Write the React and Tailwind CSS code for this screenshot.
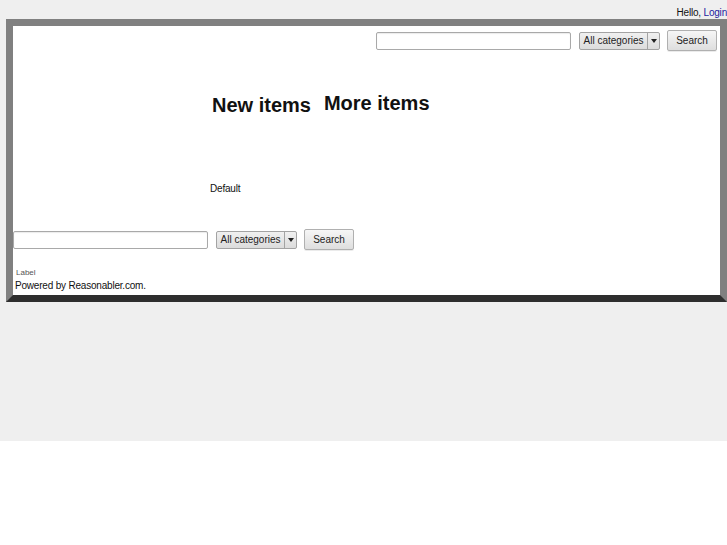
import React from "react";

function SearchRow({ inputW }) {
  return (
    <div className="flex items-center">
      <input
        type="text"
        className="h-[18px] rounded-[2px] border border-[#a9a9a9] bg-white shadow-[inset_0_1px_1px_rgba(0,0,0,0.08)] outline-none"
        style={{ width: inputW }}
      />
      <div className="ml-[8px] flex h-[18px] w-[81px] items-stretch rounded-[2px] border border-[#a3a3a3] bg-gradient-to-b from-[#f0f0f0] to-[#dcdcdc] text-[10px] text-[#222]">
        <span className="flex flex-1 items-center justify-center">All categories</span>
        <span className="flex w-[12px] items-center justify-center border-l border-[#a3a3a3]">
          <svg width="6" height="4" viewBox="0 0 6 4"><path d="M0 0h6L3 4z" fill="#222" /></svg>
        </span>
      </div>
      <button className="ml-[7px] flex h-[21px] w-[50px] items-center justify-center rounded-[2px] border border-[#b0b0b0] bg-gradient-to-b from-[#f6f6f6] to-[#dedede] text-[10px] text-[#222] shadow-[0_1px_0_rgba(0,0,0,0.08)]">
        Search
      </button>
    </div>
  );
}

export default function App() {
  return (
    <div className="w-[727px] overflow-hidden bg-white" style={{ fontFamily: '"Liberation Sans", Arial, sans-serif' }}>
      <div className="h-[441px] bg-[#efefef] pt-[6px]">
        <div className="flex h-[13px] justify-end text-[10px] leading-[13px] tracking-[-0.2px] text-[#111]">
          <span>Hello,&nbsp;</span>
          <a className="text-[#1c1ca0]" href="#">Login</a>
        </div>
        <div className="ml-[6px] w-[721px] border-[7px] border-[#808080] border-b-[#2e2e2e] bg-white">
          <div className="flex justify-end pr-[3px] pt-[4px]">
            <SearchRow inputW={195} />
          </div>
          <div className="ml-[199px] mt-[40px] flex items-start text-[20px] font-bold leading-[23px] text-[#111]">
            <span className="mt-[3px]">New items</span>
            <span className="ml-[13px] mt-[1px]">More items</span>
          </div>
          <div className="ml-[197px] mt-[66px] text-[10px] leading-[12px] tracking-[-0.2px] text-[#111]">Default</div>
          <div className="mt-[34px]">
            <SearchRow inputW={195} />
          </div>
          <div className="ml-[3px] mt-[18px] text-[8px] leading-[10px] text-[#555]">Label</div>
          <div className="ml-[2px] mt-[2px] pb-[3px] text-[10px] leading-[12px] tracking-[-0.2px] text-[#111]">Powered by Reasonabler.com.</div>
        </div>
      </div>
    </div>
  );
}
